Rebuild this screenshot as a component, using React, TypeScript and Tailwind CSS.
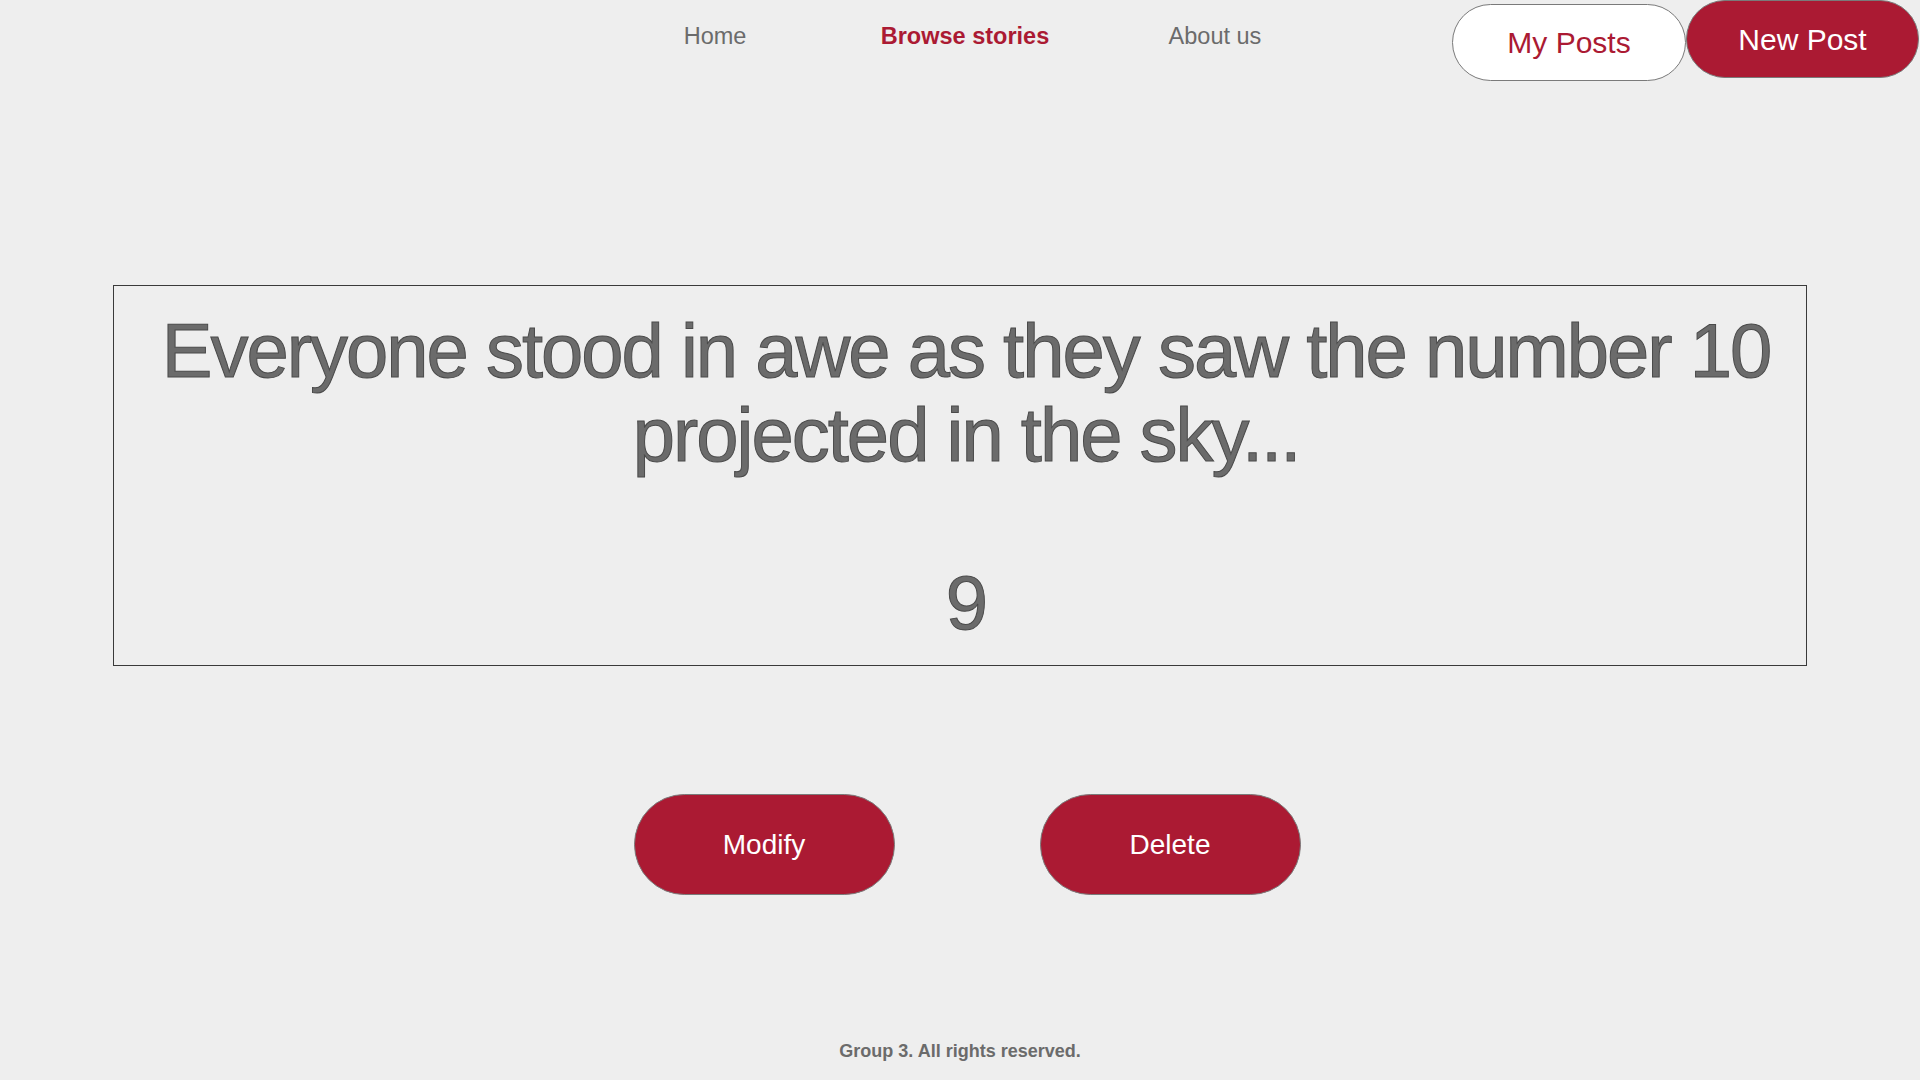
const NAV_LINKS = [
  { label: 'Home', active: false },
  { label: 'Browse stories', active: true },
  { label: 'About us', active: false },
];

export default function App() {
  return (
    <div
      className="w-[1920px] h-[1080px] bg-[#eeeeee] flex flex-col overflow-hidden"
      style={{ fontFamily: '"Liberation Sans", Arial, sans-serif' }}
    >
      {/* Header */}
      <header className="flex items-start h-[82px]">
        <nav className="flex ml-[590px] mt-[22px]">
          {NAV_LINKS.map(link => (
            <a
              key={link.label}
              href="#"
              className={
                link.active
                  ? 'w-[250px] text-center text-[23.5px] leading-[28px] font-bold text-[#ab1a33]'
                  : 'w-[250px] text-center text-[23.5px] leading-[28px] text-[#6b6b6b]'
              }
            >
              {link.label}
            </a>
          ))}
        </nav>
        <div className="flex items-start ml-[112px]">
          <button className="mt-[4px] w-[234px] h-[77px] rounded-full bg-white border border-[#7a7a7a] text-[30px] text-[#ab1a33]">
            My Posts
          </button>
          <button className="w-[233px] h-[78px] rounded-full bg-[#ab1a33] border border-[#7a7a7a] text-[30px] text-white">
            New Post
          </button>
        </div>
      </header>

      {/* Story */}
      <main className="flex flex-col items-center">
        <div className="mt-[203px] w-[1694px] h-[381px] border border-[#3a3a3a] pl-[26px] pr-[14px] pt-[23px]">
          <p className="text-center text-[76px] leading-[84px] tracking-[-2px] text-[#6b6b6b] [-webkit-text-stroke:1px_#4a4a4a]">
            Everyone stood in awe as they saw the number 10 projected in the sky...
            <br />
            <br />
            9
          </p>
        </div>

        <div className="flex gap-[145px] mt-[128px] pl-[14px]">
          <button className="w-[261px] h-[101px] rounded-full bg-[#ab1a33] border border-[#7a7a7a] text-[28px] text-white">
            Modify
          </button>
          <button className="w-[261px] h-[101px] rounded-full bg-[#ab1a33] border border-[#7a7a7a] text-[28px] text-white">
            Delete
          </button>
        </div>
      </main>

      <footer className="mt-auto pb-[18px] text-center text-[18px] leading-[22px] font-bold text-[#6b6b6b]">
        Group 3. All rights reserved.
      </footer>
    </div>
  );
}
